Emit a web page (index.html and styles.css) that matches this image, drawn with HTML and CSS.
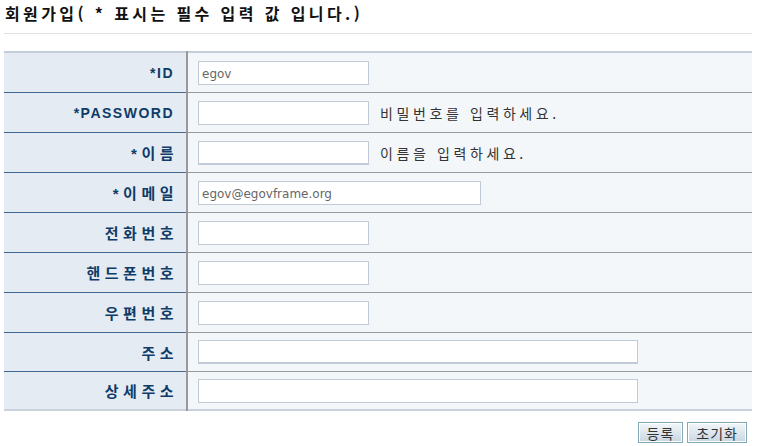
FILE: index.html
```html
<!DOCTYPE html>
<html lang="ko">
<head>
<meta charset="utf-8">
<title>회원가입</title>
<link rel="stylesheet" href="styles.css">
</head>
<body>
<div class="page">
  <h1 class="title">회원가입( * 표시는 필수 입력 값 입니다.)</h1>
  <div class="rule"></div>
  <table class="form">
    <tr>
      <th>*ID</th>
      <td><input class="inp short" type="text" value="egov"></td>
    </tr>
    <tr>
      <th>*PASSWORD</th>
      <td><input class="inp short" type="password"><span class="hint">비밀번호를 입력하세요.</span></td>
    </tr>
    <tr>
      <th><span class="ko">*이름</span></th>
      <td><input class="inp short thick" type="text"><span class="hint">이름을 입력하세요.</span></td>
    </tr>
    <tr>
      <th><span class="ko">*이메일</span></th>
      <td><input class="inp mid" type="text" value="egov@egovframe.org"></td>
    </tr>
    <tr>
      <th><span class="ko">전화번호</span></th>
      <td><input class="inp short" type="text"></td>
    </tr>
    <tr>
      <th><span class="ko">핸드폰번호</span></th>
      <td><input class="inp short" type="text"></td>
    </tr>
    <tr>
      <th><span class="ko">우편번호</span></th>
      <td><input class="inp short" type="text"></td>
    </tr>
    <tr class="short-row">
      <th><span class="ko">주소</span></th>
      <td><input class="inp long thick" type="text"></td>
    </tr>
    <tr class="short-row last">
      <th><span class="ko">상세주소</span></th>
      <td><input class="inp long" type="text"></td>
    </tr>
  </table>
  <div class="buttons">
    <button class="btn" type="button">등록</button>
    <button class="btn" type="button">초기화</button>
  </div>
</div>
</body>
</html>
```
FILE: styles.css
```css
html, body {
  margin: 0;
  padding: 0;
  background: #ffffff;
}
body {
  font-family: "Liberation Sans", "Noto Sans CJK KR", sans-serif;
  color: #333;
}
.page {
  width: 748px;
  padding-left: 4px;
}
.title {
  margin: 0;
  padding: 3px 0 0 1px;
  height: 26px;
  font-family: "Noto Sans CJK KR", sans-serif;
  font-size: 16px;
  font-weight: bold;
  color: #111;
  letter-spacing: 3.4px;
  line-height: 20px;
}
.rule {
  height: 1px;
  background: #e2e2e2;
  margin-top: 4px;
}
.form {
  margin-top: 17px;
  width: 748px;
  border-collapse: collapse;
  border-top: 2px solid #c3ced9;
  border-bottom: 2px solid #c9d2da;
}
.form th, .form td {
  height: 39px;
  padding: 0;
  border-bottom: 1px solid #999999;
}
.form tr.short-row th, .form tr.short-row td {
  height: 38px;
}
.form tr.last th, .form tr.last td {
  border-bottom: none;
  height: 37px;
}
.form th {
  width: 170px;
  padding-right: 12px;
  text-align: right;
  background: #e4ebf2;
  color: #0f3b68;
  font-size: 14px;
  font-weight: bold;
  letter-spacing: 1.5px;
  border-right: 2px solid #999999;
  border-bottom-color: #3f6790;
}
.ko {
  font-size: 15px;
  letter-spacing: 4.5px;
  margin-right: -4px;
}
.form td {
  background: #f3f7fa;
  padding-left: 10px;
}
.inp {
  box-sizing: border-box;
  height: 24px;
  border: 1px solid #c1cbd8;
  background: #fff;
  padding: 2px 3px 0;
  font-family: "DejaVu Sans", "Noto Sans CJK KR", sans-serif;
  font-size: 12px;
  color: #666;
  vertical-align: middle;
  outline: none;
}
.inp.thick {
  border-bottom-width: 2px;
}
.short { width: 171px; }
.mid { width: 283px; }
.long { width: 440px; }
.hint {
  margin-left: 11px;
  font-family: "Noto Sans CJK KR", sans-serif;
  font-size: 14px;
  color: #333;
  letter-spacing: 3.6px;
  vertical-align: middle;
}
.buttons {
  display: flex;
  justify-content: flex-end;
  gap: 4px;
  padding-right: 5px;
  margin-top: 11px;
}
.btn {
  height: 21px;
  padding: 0 8px;
  border: 1px solid #84aab8;
  background: linear-gradient(#f3f7fb, #c9d6e2);
  font-family: "Noto Sans CJK KR", sans-serif;
  font-size: 14px;
  color: #333;
  letter-spacing: 1px;
  line-height: 18px;
  box-shadow: inset 0 0 0 1px #fff;
}
```
